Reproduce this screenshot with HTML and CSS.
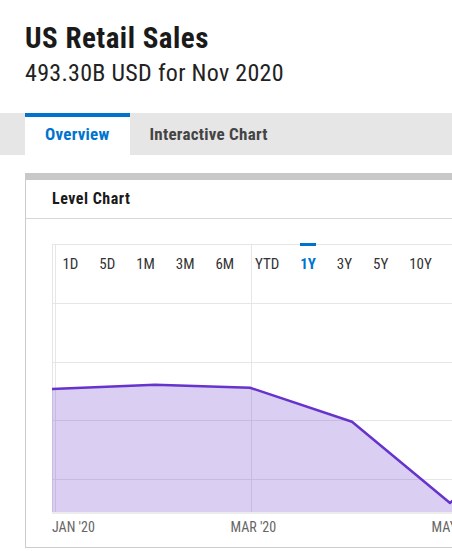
FILE: index.html
```html
<!DOCTYPE html>
<html lang="en">
<head>
<meta charset="utf-8">
<title>US Retail Sales</title>
<link rel="stylesheet" href="styles.css">
</head>
<body>
<header class="header">
  <h1 class="title">US Retail Sales</h1>
  <p class="subtitle">493.30B USD for Nov 2020</p>
</header>
<nav class="tabs">
  <a class="tab tab-active">Overview</a>
  <a class="tab">Interactive Chart</a>
</nav>
<section class="card">
  <div class="card-head">Level Chart</div>
  <div class="card-body">
    <div class="chart">
      <div class="ranges">
        <span class="range">1D</span>
        <span class="range">5D</span>
        <span class="range">1M</span>
        <span class="range">3M</span>
        <span class="range">6M</span>
        <span class="range">YTD</span>
        <span class="range range-active">1Y</span>
        <span class="range">3Y</span>
        <span class="range">5Y</span>
        <span class="range">10Y</span>
      </div>
      <svg class="plot" width="410" height="296" viewBox="0 0 410 296">
        <g stroke="#e6e6e6" stroke-width="1" fill="none">
          <line x1="0" y1="0.5" x2="410" y2="0.5"/>
          <line x1="0.5" y1="0" x2="0.5" y2="268"/>
          <line x1="3.5" y1="0" x2="3.5" y2="268"/>
          <line x1="199.5" y1="0" x2="199.5" y2="268"/>
          <line x1="0" y1="59.5" x2="410" y2="59.5"/>
          <line x1="0" y1="118.5" x2="410" y2="118.5"/>
          <line x1="0" y1="176.5" x2="410" y2="176.5"/>
          <line x1="0" y1="235.5" x2="410" y2="235.5"/>
        </g>
        <rect x="0" y="268" width="410" height="2" fill="#ececec"/>
        <polygon points="0,145 103,140.7 198,143.7 300,177.7 398,259 410,248 410,268 0,268" fill="rgba(102,51,204,0.24)"/>
        <polyline points="0,145 103,140.7 198,143.7 300,177.7 398,259 410,248" fill="none" stroke="#6633cc" stroke-width="2.5" stroke-linejoin="round"/>
        <g class="axis">
          <text x="0" y="288">JAN '20</text>
          <text x="178.5" y="288">MAR '20</text>
          <text x="379.5" y="288">MAY '20</text>
        </g>
      </svg>
    </div>
  </div>
</section>
</body>
</html>
```
FILE: styles.css
```css
html, body {
  margin: 0;
  padding: 0;
}
body {
  width: 452px;
  height: 551px;
  overflow: hidden;
  background: #ffffff;
  font-family: "Roboto Condensed", Roboto, "Liberation Sans", sans-serif;
  color: #1a1a1a;
}
.header {
  padding: 21px 0 0 25px;
}
.title {
  margin: 0;
  font-size: 29px;
  line-height: 34px;
  font-weight: 700;
  letter-spacing: 0.5px;
  color: #1a1a1a;
}
.subtitle {
  margin: 4px 0 0;
  font-size: 24px;
  line-height: 28px;
  font-weight: 400;
  letter-spacing: 0.3px;
  color: #222222;
}
.tabs {
  margin-top: 26px;
  height: 42px;
  background: #e6e6e6;
  display: flex;
  padding-left: 25px;
}
.tab {
  display: block;
  padding: 0 20px 4px;
  border-top: 4px solid transparent;
  font-size: 17px;
  line-height: 34px;
  font-weight: 700;
  letter-spacing: 0.25px;
  color: #444444;
}
.tab-active {
  background: #ffffff;
  border-top-color: #0073cf;
  color: #0073cf;
}
.card {
  margin: 18px 0 0 25px;
  width: 460px;
  border-top: 7px solid #c8c8c8;
  border-left: 1px solid #cccccc;
  border-bottom: 1px solid #cccccc;
}
.card-head {
  height: 38px;
  padding-left: 26px;
  border-bottom: 1px solid #d6d6d6;
  font-size: 16px;
  line-height: 38px;
  font-weight: 700;
  letter-spacing: 0.5px;
  color: #1a1a1a;
}
.card-body {
  padding: 25px 0 7px 26px;
}
.chart {
  position: relative;
  width: 410px;
  height: 296px;
}
.plot {
  display: block;
}
.ranges {
  position: absolute;
  top: 0;
  left: 0;
  display: flex;
}
.range {
  position: relative;
  padding: 11px 10.45px 0;
  font-size: 15px;
  line-height: 18px;
  color: #333333;
}
.range-active {
  color: #0073cf;
  font-weight: 700;
}
.range-active::before {
  content: "";
  position: absolute;
  top: -1px;
  left: 10.45px;
  right: 10.45px;
  height: 3px;
  background: #0073cf;
}
.axis {
  font-family: "Roboto Condensed", Roboto, "Liberation Sans", sans-serif;
  font-size: 14px;
  fill: #666666;
}
```
